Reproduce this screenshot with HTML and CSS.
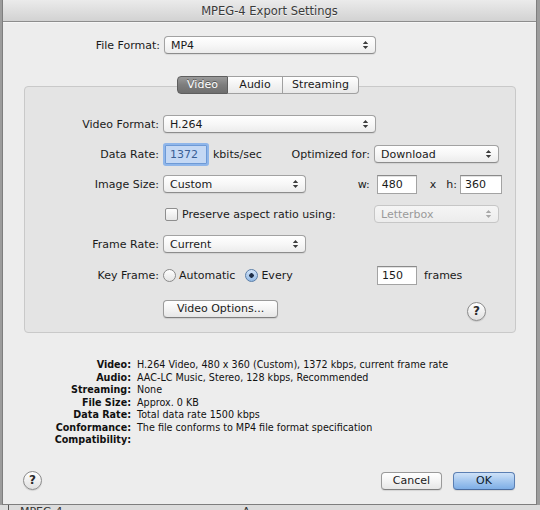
FILE: index.html
```html
<!DOCTYPE html>
<html>
<head>
<meta charset="utf-8">
<title>MPEG-4 Export Settings</title>
<link rel="stylesheet" href="styles.css">
</head>
<body>
<div class="window">
  <div class="titlebar">MPEG-4 Export Settings</div>
  <div class="content">
    <div class="row top-row">
      <span class="lbl lbl-top">File Format:</span>
      <div class="popup w-file"><span>MP4</span><svg class="arr" width="7" height="10" viewBox="0 0 7 10"><path d="M0.8 4 L3.5 1 L6.2 4 Z M0.8 6 L3.5 9 L6.2 6 Z"/></svg></div>
    </div>

    <div class="tabs">
      <span class="tab tab-video sel">Video</span><span class="tab tab-audio">Audio</span><span class="tab tab-stream">Streaming</span>
    </div>

    <div class="group">
      <div class="row grow">
        <span class="lbl">Video Format:</span>
        <div class="popup w-vformat"><span>H.264</span><svg class="arr" width="7" height="10" viewBox="0 0 7 10"><path d="M0.8 4 L3.5 1 L6.2 4 Z M0.8 6 L3.5 9 L6.2 6 Z"/></svg></div>
      </div>

      <div class="row grow pr16">
        <span class="lbl">Data Rate:</span>
        <span class="field focus w-rate">1372</span>
        <span class="txt kbits">kbits/sec</span>
        <span class="txt push opt-lbl">Optimized for:</span>
        <div class="popup w-opt"><span>Download</span><svg class="arr" width="7" height="10" viewBox="0 0 7 10"><path d="M0.8 4 L3.5 1 L6.2 4 Z M0.8 6 L3.5 9 L6.2 6 Z"/></svg></div>
      </div>

      <div class="row grow pr13">
        <span class="lbl">Image Size:</span>
        <div class="popup w-small"><span>Custom</span><svg class="arr" width="7" height="10" viewBox="0 0 7 10"><path d="M0.8 4 L3.5 1 L6.2 4 Z M0.8 6 L3.5 9 L6.2 6 Z"/></svg></div>
        <span class="txt push">w:</span>
        <span class="field w-w">480</span>
        <span class="txt times">x</span>
        <span class="txt hlbl">h:</span>
        <span class="field w-h">360</span>
      </div>

      <div class="row grow pr16">
        <span class="lbl"></span>
        <span class="check"></span>
        <span class="txt chk-txt">Preserve aspect ratio using:</span>
        <div class="popup disabled w-opt push"><span>Letterbox</span><svg class="arr" width="7" height="10" viewBox="0 0 7 10"><path d="M0.8 4 L3.5 1 L6.2 4 Z M0.8 6 L3.5 9 L6.2 6 Z"/></svg></div>
      </div>

      <div class="row grow">
        <span class="lbl">Frame Rate:</span>
        <div class="popup w-small"><span>Current</span><svg class="arr" width="7" height="10" viewBox="0 0 7 10"><path d="M0.8 4 L3.5 1 L6.2 4 Z M0.8 6 L3.5 9 L6.2 6 Z"/></svg></div>
      </div>

      <div class="row grow key-row">
        <span class="lbl">Key Frame:</span>
        <div class="radios">
          <span class="radio"></span><span class="txt r-txt">Automatic</span>
          <span class="radio on r-second"></span><span class="txt r-txt">Every</span>
        </div>
        <span class="field w-w">150</span>
        <span class="txt frames">frames</span>
      </div>

      <div class="row grow last-row pr29">
        <span class="lbl"></span>
        <span class="button w-opts">Video Options...</span>
        <span class="help push">?</span>
      </div>
    </div>

    <div class="summary">
      <span class="s-lbl">Video:</span><span class="s-val">H.264 Video, 480 x 360 (Custom), 1372 kbps, current frame rate</span>
      <span class="s-lbl">Audio:</span><span class="s-val">AAC-LC Music, Stereo, 128 kbps, Recommended</span>
      <span class="s-lbl">Streaming:</span><span class="s-val">None</span>
      <span class="s-lbl">File Size:</span><span class="s-val">Approx. 0 KB</span>
      <span class="s-lbl">Data Rate:</span><span class="s-val">Total data rate 1500 kbps</span>
      <span class="s-lbl">Conformance:</span><span class="s-val">The file conforms to MP4 file format specification</span>
      <span class="s-lbl">Compatibility:</span><span class="s-val"></span>
    </div>

    <div class="footer">
      <span class="help">?</span>
      <span class="button w-cancel push">Cancel</span>
      <span class="button default w-ok">OK</span>
    </div>
  </div>
</div>
<div class="behind"><span class="behind-line"></span><span class="behind-txt">MPEG-4</span><span class="behind-txt2">A</span></div>
</body>
</html>
```

FILE: styles.css
```css
* { box-sizing: border-box; }

html, body {
  margin: 0;
  padding: 0;
}

body {
  width: 540px;
  height: 510px;
  overflow: hidden;
  background: #9c9c9c;
  font-family: "DejaVu Sans", "Liberation Sans", sans-serif;
  font-size: 11px;
  color: #1a1a1a;
}

.window {
  margin-left: 2px;
  width: 535px;
  height: 505px;
  border: 1px solid #7e7e7e;
  border-top: none;
  display: flex;
  flex-direction: column;
  background: #ededed;
}

.titlebar {
  height: 22px;
  padding-top: 2px;
  line-height: 19px;
  text-align: center;
  font-size: 11.5px;
  color: #3a3a3a;
  background: linear-gradient(#ebebeb, #d2d2d2);
  border-bottom: 1px solid #8d8d8d;
  box-shadow: 0 1px 0 #f6f6f6;
  text-shadow: 0 1px 0 #f2f2f2;
}

.content {
  flex: 1;
  display: flex;
  flex-direction: column;
}

.row {
  display: flex;
  align-items: center;
}

.top-row {
  margin-top: 14px;
  height: 18px;
}

.lbl {
  width: 134px;
  margin-right: 4px;
  text-align: right;
  flex: none;
}

.lbl-top {
  width: 157px;
}

.push { margin-left: auto; }

.txt { white-space: nowrap; }

/* popup buttons */
.popup {
  height: 18px;
  border: 1px solid #a2a2a2;
  border-bottom-color: #8c8c8c;
  border-radius: 4px;
  background: linear-gradient(#ffffff, #f7f7f7 50%, #ececec);
  box-shadow: 0 1px 1px rgba(0,0,0,0.08);
  display: flex;
  align-items: center;
  padding-left: 6px;
  padding-right: 6px;
  flex: none;
}

.popup span { flex: 1; }

.arr { fill: #3c3c3c; }

.popup.disabled {
  color: #9a9a9a;
  border-color: #c6c6c6;
  background: linear-gradient(#f5f5f5, #ececec);
  box-shadow: none;
}

.popup.disabled .arr { fill: #a8a8a8; }

.w-file { width: 212px; }
.w-vformat { width: 213px; }
.w-opt { width: 125px; }
.w-small { width: 143px; }

/* tabs */
.tabs {
  margin-top: 22px;
  margin-bottom: -8px;
  display: flex;
  justify-content: center;
  position: relative;
  z-index: 1;
  padding-right: 3px;
}

.tab {
  height: 18px;
  line-height: 16px;
  text-align: center;
  border: 1px solid #a0a0a0;
  border-left: none;
  background: linear-gradient(#ffffff, #f3f3f3 50%, #e8e8e8);
  color: #1a1a1a;
}

.tab-video {
  width: 51px;
  border-left: 1px solid #6f6f6f;
  border-radius: 4px 0 0 4px;
}

.tab-audio { width: 55px; }

.tab-stream {
  width: 76px;
  border-radius: 0 4px 4px 0;
}

.tab.sel {
  background: linear-gradient(#9a9a9a, #7d7d7d 50%, #6e6e6e);
  border-color: #5e5e5e;
  color: #ffffff;
  text-shadow: 0 -1px 0 #555;
}

/* group box */
.group {
  margin-left: 21px;
  width: 492px;
  height: 247px;
  border: 1px solid #c9c9c9;
  border-radius: 4px;
  background: #e4e4e4;
  padding-top: 22px;
}

.grow { height: 30px; }
.pr16 { padding-right: 16px; }
.pr13 { padding-right: 13px; }
.pr29 { padding-right: 29px; }
.key-row { margin-top: 1px; }
.last-row { margin-top: 4px; }

/* text fields */
.field {
  height: 19px;
  line-height: 17px;
  border: 1px solid #a3a3a3;
  border-top-color: #8a8a8a;
  background: #ffffff;
  padding-left: 4px;
  flex: none;
  box-shadow: inset 0 1px 0 #e2e2e2;
}

.field.focus {
  margin-left: 2px;
  background: #c4d8f4;
  color: #3a5f94;
  border-color: #6e9ad6;
  box-shadow: 0 0 0 2px #8fb6ea;
  border-radius: 1px;
}

.w-rate { width: 42px; }
.w-w { width: 40px; }
.w-h { width: 42px; }

.kbits { margin-left: 6px; }

.opt-lbl { margin-right: 4px; }

.txt.push + .field { margin-left: 7px; }

.times { margin-left: 13px; }
.hlbl { margin-left: 10px; }
.hlbl + .field { margin-left: 3px; }

/* checkbox */
.check {
  margin-left: 2px;
  width: 13px;
  height: 13px;
  border: 1px solid #8e8e8e;
  border-radius: 2px;
  background: linear-gradient(#fdfdfd, #e6e6e6);
  flex: none;
}

.chk-txt { margin-left: 4px; }

/* radios */
.radios {
  width: 214px;
  display: flex;
  align-items: center;
  flex: none;
}

.radio {
  width: 13px;
  height: 13px;
  border-radius: 50%;
  border: 1px solid #8a8a8a;
  background: linear-gradient(#ffffff, #e4e4e4);
  flex: none;
}

.radio.on {
  border-color: #5a7ea8;
  background: radial-gradient(circle at 50% 50%, #1e2f48 0 2px, transparent 2.5px), linear-gradient(#d3e4f8, #93b9e4);
}

.r-txt { margin-left: 3px; }
.r-second { margin-left: 10px; }

.frames { margin-left: 7px; }

/* buttons */
.button {
  height: 18px;
  line-height: 16px;
  text-align: center;
  border: 1px solid #9a9a9a;
  border-bottom-color: #7f7f7f;
  border-radius: 4px;
  background: linear-gradient(#ffffff, #f4f4f4 50%, #e6e6e6);
  box-shadow: 0 1px 1px rgba(0,0,0,0.1);
  flex: none;
}

.w-opts { width: 115px; }
.w-cancel { width: 61px; }
.w-ok { width: 62px; margin-left: 11px; }

.button.default {
  border-color: #5b7fb3;
  border-bottom-color: #4a6c9f;
  background: linear-gradient(#cfe2f8, #a4c7ef 50%, #7eaee6);
  color: #0e1a2c;
}

.help {
  width: 19px;
  height: 19px;
  border-radius: 50%;
  border: 1px solid #8c8c8c;
  background: linear-gradient(#ffffff, #e0e0e0);
  box-shadow: 0 1px 1px rgba(0,0,0,0.12);
  text-align: center;
  line-height: 17px;
  font-weight: bold;
  font-size: 12px;
  color: #2a2a2a;
  flex: none;
}

.last-row .help { margin-top: 4px; }

/* summary */
.summary {
  margin-top: 26px;
  display: grid;
  grid-template-columns: 128px auto;
  column-gap: 6px;
  font-size: 9.6px;
  line-height: 12.5px;
  color: #111;
}

.s-lbl {
  text-align: right;
  font-weight: bold;
}

.s-val { white-space: nowrap; }

/* footer */
.footer {
  margin-top: auto;
  display: flex;
  align-items: center;
  padding: 0 21px 14px 20px;
}

/* window behind */
.behind {
  height: 5px;
  overflow: hidden;
  background: #dcdcdc;
  display: flex;
  font-size: 11px;
  line-height: 14px;
  color: #333;
}

.behind-line {
  width: 1px;
  height: 5px;
  margin-left: 8px;
  background: #555;
}

.behind-txt { margin-left: 11px; }
.behind-txt2 { margin-left: 180px; }
```
